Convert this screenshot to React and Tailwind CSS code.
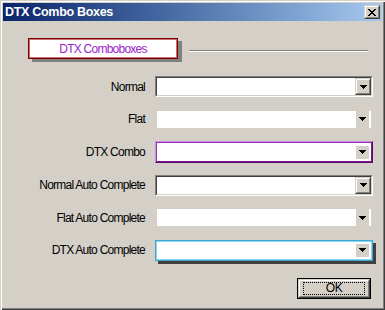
import React from "react";

const FONT = { fontFamily: '"Liberation Sans", Arial, sans-serif' };

function Arrow() {
  return (
    <svg width="7" height="4" viewBox="0 0 7 4" shapeRendering="crispEdges">
      <path d="M0 0h7v1h-1v1h-1v1h-1v1h-1v-1h-1v-1h-1v-1h-1z" fill="#000" />
    </svg>
  );
}

// classic raised 3D button face
function Raised({ className = "", children }) {
  return (
    <div className={`border border-t-[#d4d0c8] border-l-[#d4d0c8] border-r-[#404040] border-b-[#404040] ${className}`}>
      <div className="h-full border border-t-white border-l-white border-r-[#808080] border-b-[#808080] bg-[#d4d0c8] flex items-center justify-center">
        {children}
      </div>
    </div>
  );
}

function NormalCombo() {
  return (
    <div className="h-[21px] border border-t-[#808080] border-l-[#808080] border-r-white border-b-white">
      <div className="h-full border border-t-[#404040] border-l-[#404040] border-r-[#d4d0c8] border-b-[#d4d0c8] bg-white flex justify-end">
        <Raised className="w-[16px] h-full">
          <Arrow />
        </Raised>
      </div>
    </div>
  );
}

function FlatCombo() {
  return (
    <div className="h-[21px] border-2 border-[#d4d0c8] bg-white flex justify-end pr-[2px]">
      <div className="w-[13px] h-full bg-[#d4d0c8] flex items-center justify-center">
        <Arrow />
      </div>
    </div>
  );
}

function DtxCombo() {
  return (
    <div className="h-[22px] border border-t-[#c88ee0] border-l-[#c88ee0] border-r-[#5a0a6a] border-b-[#5a0a6a]">
      <div className="h-full border border-t-[#9a30c0] border-l-[#9a30c0] border-r-[#7a1a90] border-b-[#7a1a90] bg-white flex items-center justify-end pr-[2px]">
        <div className="w-[13px] h-[13px] bg-[#d4d0c8] flex items-center justify-center">
          <Arrow />
        </div>
      </div>
    </div>
  );
}

function DtxAutoCombo() {
  return (
    <div className="h-[21px] border border-[#3aa6d4] shadow-[3px_3px_0_#404040]">
      <div className="h-full border border-[#8fd2ee] bg-white flex items-center justify-end pr-[2px]">
        <div className="w-[13px] h-[13px] bg-[#d4d0c8] flex items-center justify-center">
          <Arrow />
        </div>
      </div>
    </div>
  );
}

const rows = [
  ["Normal", NormalCombo],
  ["Flat", FlatCombo],
  ["DTX Combo", DtxCombo],
  ["Normal Auto Complete", NormalCombo],
  ["Flat Auto Complete", FlatCombo],
  ["DTX Auto Complete", DtxAutoCombo],
];

export default function App() {
  return (
    <div
      className="w-[385px] h-[310px] bg-[#d4d0c8] p-[3px] flex flex-col shadow-[inset_1px_1px_0_#d4d0c8,inset_2px_2px_0_#ffffff,inset_-1px_-1px_0_#404040,inset_-2px_-2px_0_#808080]"
      style={FONT}
    >
      {/* Title bar */}
      <div className="h-[18px] flex items-center justify-between pl-[2px] pr-[2px] bg-linear-to-r from-[#0a246a] to-[#a6caf0]">
        <span className="text-white font-bold text-[12.5px] tracking-[-0.3px] leading-none">DTX Combo Boxes</span>
        <Raised className="w-[16px] h-[14px]">
          <svg width="8" height="7" viewBox="0 0 8 7" shapeRendering="crispEdges">
            <path d="M0 0h2v1h1v1h2v-1h1v-1h2v1h-1v1h-1v1h-1v1h1v1h1v1h1v1h-2v-1h-1v-1h-2v1h-1v1h-2v-1h1v-1h1v-1h1v-1h-1v-1h-1v-1h-1z" fill="#000" />
          </svg>
        </Raised>
      </div>

      {/* Body */}
      <div className="flex-1 flex flex-col pt-[17px]">
        <div className="flex items-start pl-[25px]">
          <div className="w-[150px] h-[21px] bg-white border border-[#800000] shadow-[4px_3px_0_#808080,inset_0_0_0_1px_#c87070] flex items-center justify-center text-[12px] tracking-[-0.75px] text-[#9a1ec8]">
            DTX Comboboxes
          </div>
          <div className="ml-[11px] mt-[12px] w-[179px] border-t border-t-[#808080] border-b border-b-white" />
        </div>

        <div className="mt-[17px] grid grid-cols-[142px_218px] gap-x-[10px] gap-y-[11.5px]">
          {rows.map(([label, Combo]) => (
            <React.Fragment key={label}>
              <div className="flex items-center justify-end text-[12px] tracking-[-0.75px] text-black">{label}</div>
              <Combo />
            </React.Fragment>
          ))}
        </div>

        <div className="mt-[17px] ml-[294px] w-[74px] h-[21px] border border-black">
          <Raised className="h-full">
            <div className="w-[62px] h-[13px] border border-dotted border-black flex items-center justify-center text-[12px] tracking-[-0.5px] leading-none">
              OK
            </div>
          </Raised>
        </div>
      </div>
    </div>
  );
}
